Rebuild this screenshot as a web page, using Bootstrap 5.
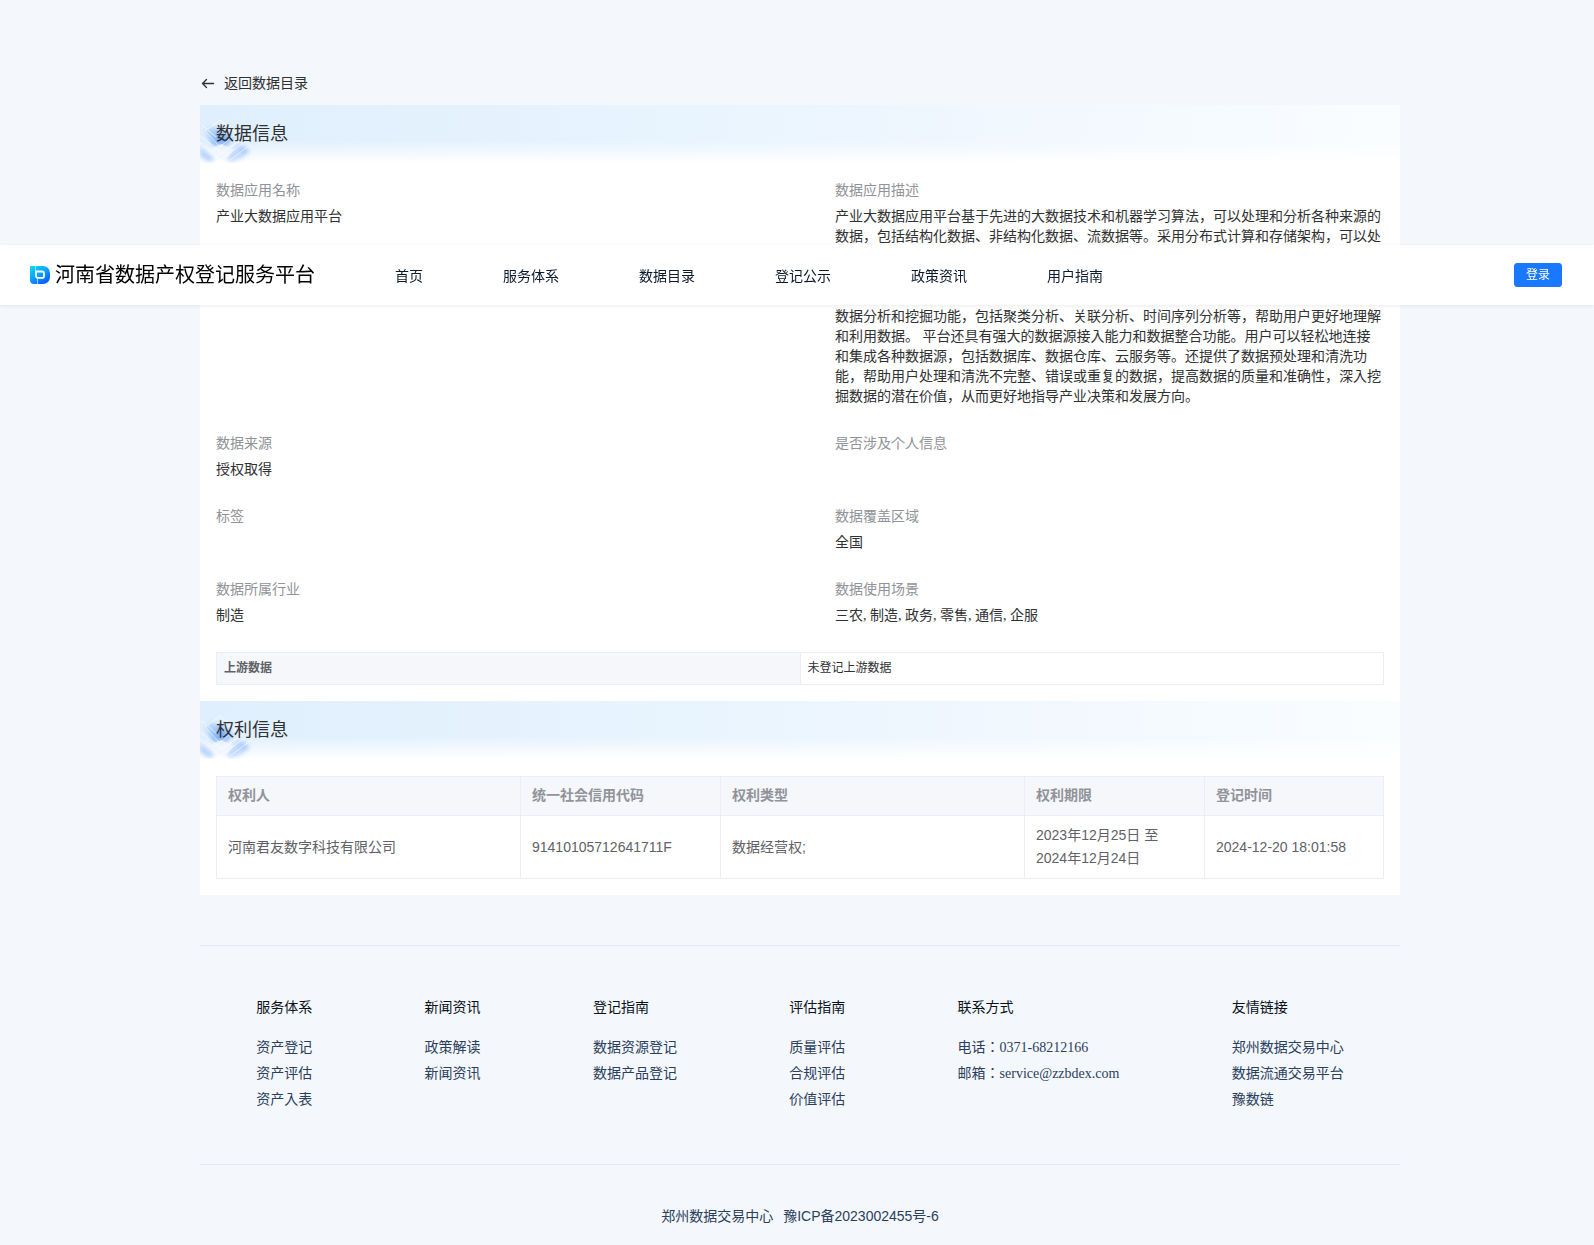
<!DOCTYPE html>
<html>
<head>
<meta charset="utf-8">
<meta name="viewport" content="width=device-width, initial-scale=1">
<title>河南省数据产权登记服务平台</title>
<link href="https://cdn.jsdelivr.net/npm/bootstrap@5.3.0/dist/css/bootstrap.min.css" rel="stylesheet">
<style>
  body {
    background: #f4f7fc;
    font-family: "Liberation Serif", "Noto Sans CJK JP", serif;
    font-size: 14px;
    line-height: 20px;
    color: #303133;
  }
  a { text-decoration: none; color: inherit; }
  .font-ui { font-family: "Liberation Sans", "Noto Sans CJK JP", sans-serif; }

  .site-nav {
    top: 245px;
    z-index: 10;
    height: 60px;
    padding: 0 32px 0 30px;
    background: #fff;
    box-shadow: 0 1px 4px rgba(0, 0, 0, .08);
  }
  .brand { font-size: 20px; line-height: 28px; color: #000; gap: 5px; margin-right: 80px; }
  .menu { gap: 80px; color: #0c1a2e; padding-top: 4px; }
  .btn-login {
    --bs-btn-padding-x: 11px;
    --bs-btn-padding-y: 2px;
    --bs-btn-font-size: 12px;
    --bs-btn-line-height: 18px;
    --bs-btn-border-radius: 3px;
    --bs-btn-bg: #1a78ff;
    --bs-btn-border-color: #1a78ff;
  }

  .page { padding: 74px 0 0 6px; }
  .wrap { max-width: 1200px; margin: 0 auto; }
  .back { gap: 8px; margin-bottom: 11px; }

  .banner {
    height: 58px;
    background:
      linear-gradient(180deg, rgba(255,255,255,0) 62%, #fff),
      linear-gradient(90deg, #e0effd, #e8f4fe 40%, #f0f7fe 65%, #fafdff);
  }
  .banner h2 { font-size: 18px; line-height: 24px; padding: 17px 16px 0; margin: 0; font-weight: 400; }

  .fields { padding: 18px 16px 0; }
  .field { padding-bottom: 27px; }
  .field-row:last-child .field { padding-bottom: 26px; }
  .field-wide { width: 53%; }
  .field dt { font-weight: 400; color: #909399; margin-bottom: 6px; }
  .field dd { margin: 0; min-height: 20px; }

  .grid { --bs-table-bg: transparent; margin: 0; border-color: #ebeef5; table-layout: fixed; }
  .grid th { background: #f5f7fa; }
  .grid-wrap { padding: 0 16px 16px; }
  .banner + .grid-wrap { padding-top: 17px; }
  .upstream { font-size: 12px; color: #303133; }
  .upstream > :not(caption) > * > * { padding: 5px 7px 6px; }
  .upstream th { color: #606266; }
  .rights { color: #606266; line-height: 23px; }
  .rights > :not(caption) > * > * { padding: 8px 11px; vertical-align: middle; }
  .rights thead th { color: #909399; padding-top: 7px; padding-bottom: 8px; }
  .col-lg-text { width: 304px; }
  .col-code { width: 200px; }
  .col-date { width: 180px; }

  .foot { border: solid #e4e8ee; border-width: 1px 0; padding: 52px 0 48px; margin-top: 50px; color: #2b3f5c; }
  .foot h3 { font-size: 14px; line-height: 20px; font-weight: 400; color: #0a1220; margin: 0 0 20px; }
  .foot li { margin-bottom: 6px; }
  .legal { gap: 10px; padding: 41px 0 19px; color: #2b3f5c; }
</style>
</head>
<body>

<nav class="site-nav position-fixed start-0 end-0 d-flex align-items-center">
  <a class="brand d-flex align-items-center" href="#">
    <svg width="20" height="20" viewBox="0 0 20 20" aria-hidden="true">
      <defs>
        <linearGradient id="lg" x1="0" y1="0" x2=".7" y2="1">
          <stop offset="0" stop-color="#08e0f0"/><stop offset=".5" stop-color="#0aa5fb"/><stop offset="1" stop-color="#0b5cff"/>
        </linearGradient>
      </defs>
      <path fill="url(#lg)" d="M0 1h13a7 7 0 0 1 7 7v4a7 7 0 0 1-7 7H4a4 4 0 0 1-4-4z"/>
      <path stroke="#fff" stroke-width=".8" d="M5.500 1v6" opacity=".7"/>
      <path fill="none" stroke="#fff" stroke-width="1.800" d="M5.200 6.500H12a2 2 0 0 1 2 2v2.400a2 2 0 0 1-2 2H8a2 2 0 0 1-2-2V6.500"/>
      <path stroke="#fff" stroke-width=".8" d="M7.500 13.500v5.500" opacity=".8"/>
    </svg>
    <span>河南省数据产权登记服务平台</span>
  </a>
  <div class="menu d-flex flex-grow-1">
    <a href="#">首页</a>
    <a href="#">服务体系</a>
    <a href="#">数据目录</a>
    <a href="#">登记公示</a>
    <a href="#">政策资讯</a>
    <a href="#">用户指南</a>
  </div>
  <button type="button" class="btn btn-primary btn-login font-ui">登录</button>
</nav>

<svg width="0" height="0" class="position-absolute" aria-hidden="true">
  <defs>
    <filter id="soft" x="-30%" y="-30%" width="160%" height="160%"><feGaussianBlur stdDeviation="2"/></filter>
    <filter id="crisp" x="-30%" y="-30%" width="160%" height="160%"><feGaussianBlur stdDeviation=".5"/></filter>
    <symbol id="art" viewBox="0 0 60 58">
      <g filter="url(#soft)">
        <path fill="#7fb2fb" opacity=".8" d="M8 31 18 23 34 33 26 41 13 41z"/>
        <path fill="#5a9bf8" opacity=".4" d="M14 34 22 30 28 35 20 39z"/>
        <path fill="#a9cdfc" opacity=".8" d="M5 26 13 21 18 29 10 36z"/>
        <path fill="#b5d2fd" d="M0 42 15 54 9 57 0 51z"/>
        <path fill="#c3dafd" d="M26 53 38 38 50 46 42 53 31 57z"/>
        <path fill="#9cc3fc" opacity=".6" d="M38 42 46 41 49 47 42 50z"/>
      </g>
      <g filter="url(#crisp)">
        <path fill="#f0f6ff" opacity=".8" d="M10 44 21 39 34 45 25 55 18 55z"/>
        <g fill="none" stroke="#fff" opacity=".6">
          <path d="M5 26 20 15 36 28 20 42z"/><path d="M0 31 22 48 46 31"/><path d="M2 20 16 32"/><path d="M0 38 20 55 46 36"/><path d="M30 55 50 40"/>
        </g>
      </g>
    </symbol>
  </defs>
</svg>

<div class="page">
  <main class="wrap">
    <a class="back d-inline-flex align-items-center" href="#">
      <svg width="16" height="16" viewBox="0 0 16 16" fill="none" stroke="#303133" stroke-width="1.300" stroke-linecap="round" stroke-linejoin="round" aria-hidden="true"><path d="M13.500 7.500H2.500M6.500 3.500 2.500 7.500l4 4"/></svg>
      <span>返回数据目录</span>
    </a>

    <div class="bg-white">
      <section>
        <div class="banner position-relative">
          <svg class="position-absolute top-0 start-0" width="60" height="58" aria-hidden="true"><use href="#art"/></svg>
          <h2 class="position-relative">数据信息</h2>
        </div>
        <dl class="fields mb-0">
          <div class="field-row d-flex">
            <div class="field field-wide flex-shrink-0"><dt>数据应用名称</dt><dd>产业大数据应用平台</dd></div>
            <div class="field"><dt>数据应用描述</dt><dd>产业大数据应用平台基于先进的大数据技术和机器学习算法，可以处理和分析各种来源的数据，包括结构化数据、非结构化数据、流数据等。采用分布式计算和存储架构，可以处理海量的数据，具有很高的可扩展性和可靠性，能够满足不同规模的企业数据处理需求。同时平台支持多种机器学习算法，包括分类、回归、聚类以及深度学习等，可以自动完成模型的训练、评估与部署，并且能够根据业务需求进行持续的优化和更新。平台提供多种数据分析和挖掘功能，包括聚类分析、关联分析、时间序列分析等，帮助用户更好地理解和利用数据。 平台还具有强大的数据源接入能力和数据整合功能。用户可以轻松地连接和集成各种数据源，包括数据库、数据仓库、云服务等。还提供了数据预处理和清洗功能，帮助用户处理和清洗不完整、错误或重复的数据，提高数据的质量和准确性，深入挖掘数据的潜在价值，从而更好地指导产业决策和发展方向。</dd></div>
          </div>
          <div class="field-row d-flex">
            <div class="field field-wide flex-shrink-0"><dt>数据来源</dt><dd>授权取得</dd></div>
            <div class="field"><dt>是否涉及个人信息</dt><dd></dd></div>
          </div>
          <div class="field-row d-flex">
            <div class="field field-wide flex-shrink-0"><dt>标签</dt><dd></dd></div>
            <div class="field"><dt>数据覆盖区域</dt><dd>全国</dd></div>
          </div>
          <div class="field-row d-flex">
            <div class="field field-wide flex-shrink-0"><dt>数据所属行业</dt><dd>制造</dd></div>
            <div class="field"><dt>数据使用场景</dt><dd>三农, 制造, 政务, 零售, 通信, 企服</dd></div>
          </div>
        </dl>
        <div class="grid-wrap">
          <table class="table table-bordered grid upstream font-ui">
            <tbody><tr><th scope="row">上游数据</th><td>未登记上游数据</td></tr></tbody>
          </table>
        </div>
      </section>

      <section>
        <div class="banner position-relative">
          <svg class="position-absolute top-0 start-0" width="60" height="58" aria-hidden="true"><use href="#art"/></svg>
          <h2 class="position-relative">权利信息</h2>
        </div>
        <div class="grid-wrap">
          <table class="table table-bordered grid rights font-ui">
            <colgroup><col class="col-lg-text"><col class="col-code"><col class="col-lg-text"><col class="col-date"><col></colgroup>
            <thead><tr><th scope="col">权利人</th><th scope="col">统一社会信用代码</th><th scope="col">权利类型</th><th scope="col">权利期限</th><th scope="col">登记时间</th></tr></thead>
            <tbody><tr><td>河南君友数字科技有限公司</td><td>91410105712641711F</td><td>数据经营权;</td><td>2023年12月25日 至 2024年12月24日</td><td>2024-12-20 18:01:58</td></tr></tbody>
          </table>
        </div>
      </section>
    </div>
  </main>

  <footer class="wrap">
    <div class="foot d-flex justify-content-around">
      <div><h3>服务体系</h3><ul class="list-unstyled mb-0"><li><a href="#">资产登记</a></li><li><a href="#">资产评估</a></li><li><a href="#">资产入表</a></li></ul></div>
      <div><h3>新闻资讯</h3><ul class="list-unstyled mb-0"><li><a href="#">政策解读</a></li><li><a href="#">新闻资讯</a></li></ul></div>
      <div><h3>登记指南</h3><ul class="list-unstyled mb-0"><li><a href="#">数据资源登记</a></li><li><a href="#">数据产品登记</a></li></ul></div>
      <div><h3>评估指南</h3><ul class="list-unstyled mb-0"><li><a href="#">质量评估</a></li><li><a href="#">合规评估</a></li><li><a href="#">价值评估</a></li></ul></div>
      <div><h3>联系方式</h3><ul class="list-unstyled mb-0"><li>电话：0371-68212166</li><li>邮箱：service@zzbdex.com</li></ul></div>
      <div><h3>友情链接</h3><ul class="list-unstyled mb-0"><li><a href="#">郑州数据交易中心</a></li><li><a href="#">数据流通交易平台</a></li><li><a href="#">豫数链</a></li></ul></div>
    </div>
    <div class="legal d-flex justify-content-center font-ui">
      <span>郑州数据交易中心</span>
      <a href="#">豫ICP备2023002455号-6</a>
    </div>
  </footer>
</div>

<script src="https://cdn.jsdelivr.net/npm/bootstrap@5.3.0/dist/js/bootstrap.bundle.min.js"></script>
</body>
</html>
